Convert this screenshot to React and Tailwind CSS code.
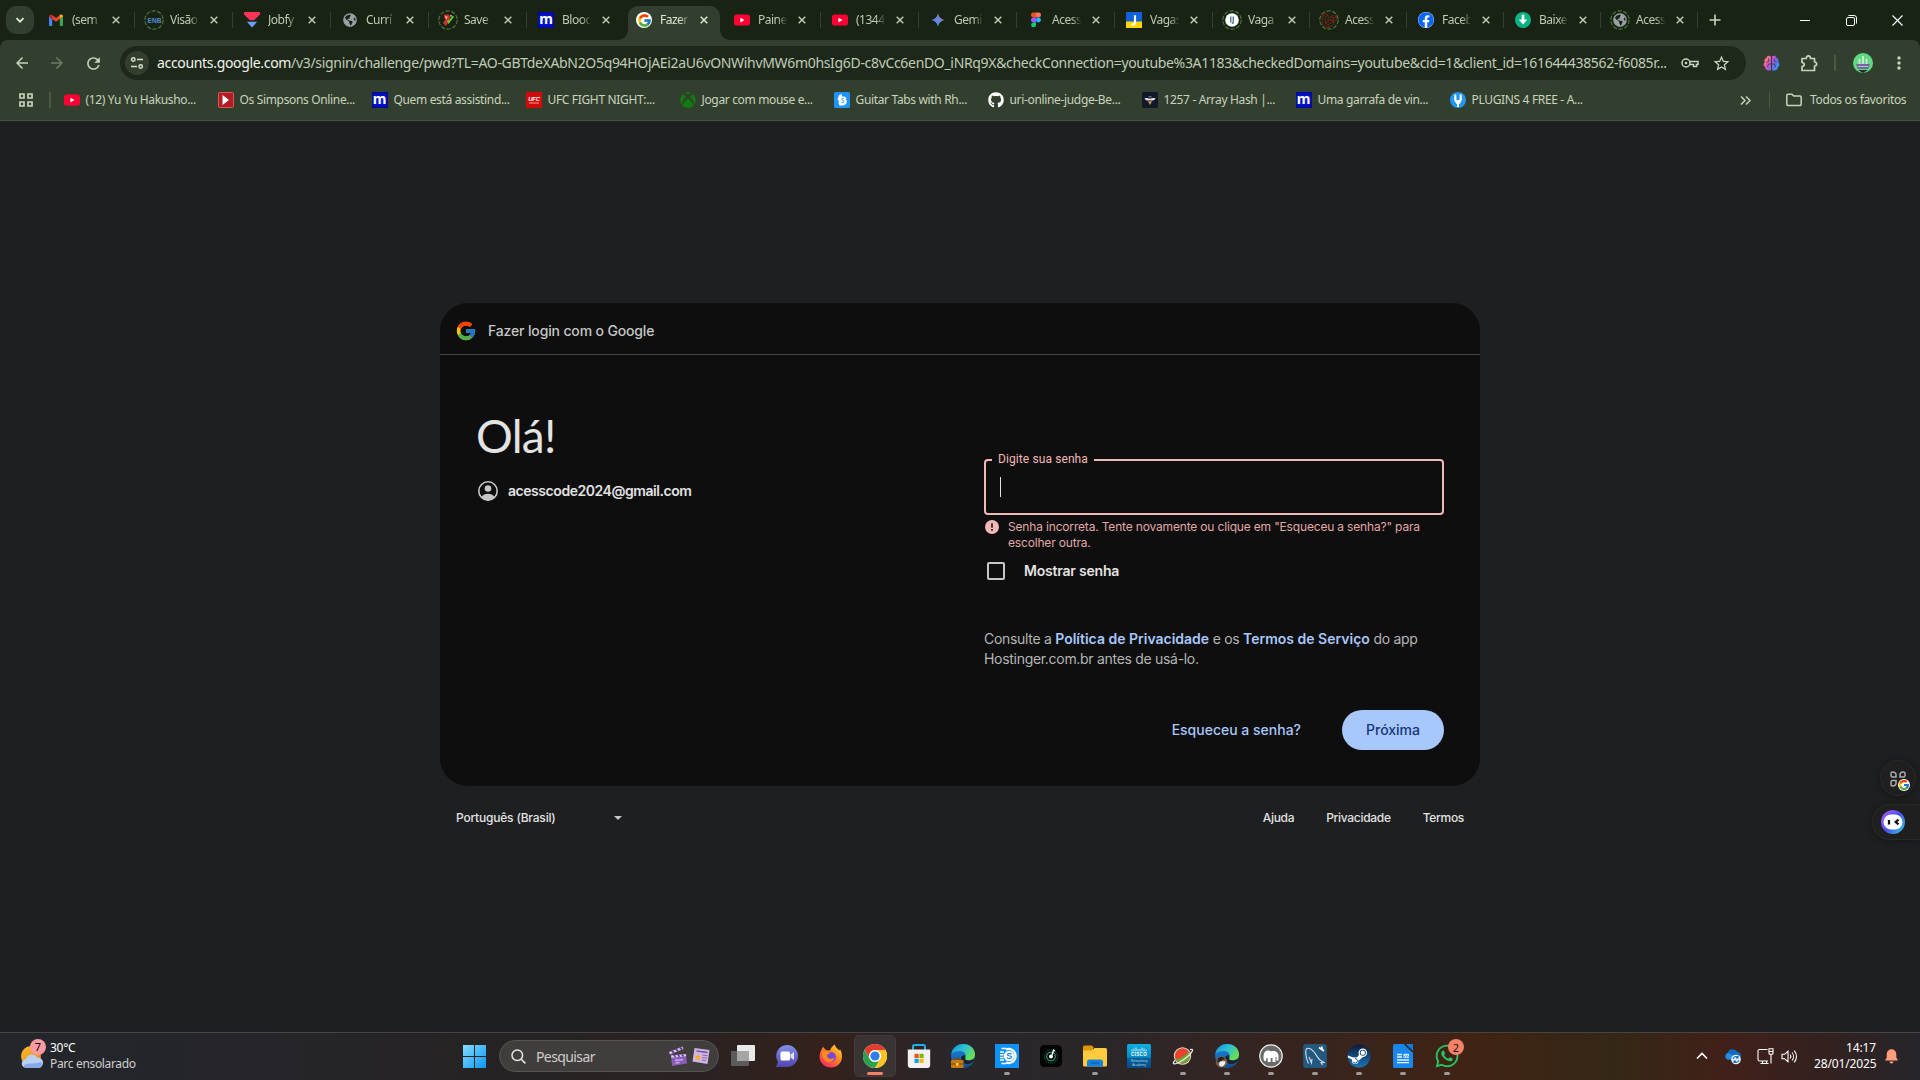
import React from 'react';
import { FcGoogle } from 'react-icons/fc';
import { FaFacebook, FaGithub, FaXbox, FaWhatsapp, FaLaravel, FaGlobeAmericas } from 'react-icons/fa';
import { MdOutlineExtension, MdArrowBack, MdArrowForward, MdRefresh, MdMoreVert, MdStarBorder } from 'react-icons/md';

const Svg = ({ s = 16, vb = '0 0 16 16', className = '', children }) => (
  <svg width={s} height={s} viewBox={vb} fill="none" className={`block shrink-0 ${className}`}>{children}</svg>
);

/* ---------- favicons ---------- */
const Gmail = () => (
  <Svg>
    <path d="M1 13.2V4.5l3.2 2.4V14H2a1 1 0 0 1-1-.8Z" fill="#4285f4" />
    <path d="M11.8 14V6.9L15 4.5V13a1 1 0 0 1-1 1Z" fill="#34a853" />
    <path d="M1 4.6C1 2.9 2.9 2 4.2 3v3.9L1 4.5Z" fill="#c5221f" />
    <path d="M4.2 3 8 5.9 11.8 3v3.9L8 9.8 4.2 6.9Z" fill="#ea4335" />
    <path d="M11.8 3C13.1 2 15 2.9 15 4.6l-3.2 2.3Z" fill="#fbbc04" />
  </Svg>
);
const Youtube = () => (
  <Svg>
    <rect x="0" y="2.6" width="16" height="11" rx="2.6" fill="#ff0033" />
    <path d="M6.4 5.8v4.6l4-2.3Z" fill="#fff" />
  </Svg>
);
const Ring = ({ children }) => (
  <span className="-m-0.5 grid size-5 shrink-0 place-items-center">
    <Svg s={20} vb="0 0 20 20" className="col-start-1 row-start-1">
      <circle cx="10" cy="10" r="9.2" stroke="#4c7340" strokeWidth="1.2" strokeDasharray="4.2 1.6" />
    </Svg>
    <span className="col-start-1 row-start-1 grid place-items-center">{children}</span>
  </span>
);
const Env = () => (
  <Ring>
    <Svg s={15} vb="0 0 15 15">
      <text x="7.5" y="10" textAnchor="middle" fontSize="6.6" fontWeight="800" fill="#4d8fd6" fontFamily="Liberation Sans">ENB</text>
    </Svg>
  </Ring>
);
const Jobfy = () => (
  <Svg>
    <path d="M0 0h16v2.4L10 8.2H6L0 2.4Z" fill="#fb3458" />
    <path d="M2.8 9.8h10.4L8 15.6Z" fill="#6b9dfa" />
  </Svg>
);
const Globe = () => <FaGlobeAmericas size={14} color="#9aa0a6" className="m-px shrink-0" />;
const SaveIcon = () => (
  <Ring>
    <Svg s={14} vb="0 0 14 14">
      <path d="M2.500 1.500 8 1.500l1.500 4L5 13l-3-3 2-3Z" fill="#d22d2d" />
      <path d="m6 8 1.500 3L13 4l-1-1.500L8 7.500 7.300 6.500Z" fill="#54d32c" />
      <path d="M4 3.500h2.500L5.500 6ZM9 2l2 .5-1 2Z" fill="#f3ece8" />
    </Svg>
  </Ring>
);
const MIcon = () => (
  <span className="flex size-4 shrink-0 items-center justify-center bg-[#0511c8] pb-0.5 font-['Noto_Sans',sans-serif] text-[14px] leading-none font-bold text-white shadow-[inset_0_0_3px_#000450]">m</span>
);
const Gemini = () => (
  <Svg>
    <defs>
      <linearGradient id="gem" gradientUnits="userSpaceOnUse" x1="1" y1="12" x2="15" y2="4"><stop stopColor="#3f8cf3" /><stop offset=".55" stopColor="#6f86dd" /><stop offset="1" stopColor="#c9737c" /></linearGradient>
    </defs>
    <path d="M8 1c.4 3.700 3.200 6.600 7 7-3.800.4-6.600 3.300-7 7-.4-3.700-3.200-6.600-7-7 3.800-.4 6.600-3.300 7-7Z" fill="url(#gem)" />
  </Svg>
);
const Figma = () => (
  <Svg>
    <path d="M8 .6H5.400a2.450 2.450 0 0 0 0 4.900H8Z" fill="#f24e1e" />
    <path d="M8 .6h2.600a2.450 2.450 0 0 1 0 4.900H8Z" fill="#ff7262" />
    <path d="M8 5.500H5.400a2.450 2.450 0 0 0 0 4.900H8Z" fill="#a259ff" />
    <circle cx="10.500" cy="7.950" r="2.450" fill="#1abcfe" />
    <path d="M8 10.400H5.400A2.450 2.450 0 1 0 8 12.900Z" fill="#0acf83" />
  </Svg>
);
const JIcon = () => (
  <Svg>
    <rect width="16" height="10" fill="#0f62dc" />
    <rect y="9.500" width="16" height="6.500" fill="#ffd500" />
    <path d="M9 3.200v7.300c0 2-1.300 2.300-3.500 2" stroke="#fff" strokeWidth="2.200" />
  </Svg>
);
const Ij = () => (
  <Ring>
    <Svg s={14} vb="0 0 14 14">
      <circle cx="7" cy="7" r="6.800" fill="#fff" />
      <path d="M5.800 3.500v6M8.300 3.500v5.500c0 1-.6 1.500-1.500 1.500" stroke="#4f7899" strokeWidth="1.400" />
    </Svg>
  </Ring>
);
const Laravel = () => <Ring><FaLaravel size={15} color="#b3241c" /></Ring>;
const Facebook = () => (
  <span className="grid size-4 shrink-0 place-items-center rounded-full bg-white"><FaFacebook size={16} color="#0866ff" /></span>
);
const Baixe = () => (
  <Svg>
    <circle cx="8" cy="8" r="8" fill="#0ab286" />
    <path d="M6.700 2.800h2.600v4.600h3L8 12.500 3.700 7.400h3Z" fill="#fff" />
  </Svg>
);
const GlobeRing = () => <Ring><FaGlobeAmericas size={14} color="#9aa0a6" /></Ring>;
const GoogleRound = () => (
  <span className="grid size-4 shrink-0 place-items-center rounded-full bg-white"><FcGoogle size={15} /></span>
);

const TABS = [
  ['(sem', Gmail], ['Visão', Env], ['Jobfy', Jobfy], ['Currí', Globe], ['Save', SaveIcon], ['Blood', MIcon],
  ['Fazer', GoogleRound], ['Paine', Youtube], ['(1344', Youtube], ['Gemi', Gemini], ['Acess', Figma], ['Vagas', JIcon],
  ['Vaga', Ij], ['Acess', Laravel], ['Faceb', Facebook], ['Baixe', Baixe], ['Acess', GlobeRing],
];

const Close = ({ className = '' }) => (
  <Svg s={8} vb="0 0 8 8" className={className}><path d="m.7.7 6.600 6.600M7.300.7.7 7.300" stroke="currentColor" strokeWidth="1.500" /></Svg>
);

function Tab({ title, Icon, index }) {
  const active = index === 6;
  const sep = index !== 5 && index !== 6;
  return (
    <div className={`relative flex h-10 items-center pl-[11px] ${index >= 12 ? 'w-[97px]' : 'w-[98px]'} ${active ? 'text-[#dfe6d6]' : 'text-[#bdcbb3]'}`}>
      {active && (
        <svg className="absolute -left-[7px] top-1.5" width="112" height="34" viewBox="0 0 112 34">
          <path d="M0 34a10 10 0 0 0 10-10V10A10 10 0 0 1 20 0H92a10 10 0 0 1 10 10V24a10 10 0 0 0 10 10Z" fill="#333f2e" />
        </svg>
      )}
      <span className="relative flex shrink-0"><Icon /></span>
      <span className="relative ml-2 w-[32px] text-[12px] tracking-[-0.5px] whitespace-nowrap [mask-image:linear-gradient(to_right,black_62%,transparent_92%)]">{title}</span>
      <Close className="relative ml-[8px]" />
      {sep && <span className="ml-auto h-4 w-[1.500px] bg-[#34402f]" />}
    </div>
  );
}

/* ---------- bookmarks ---------- */
const Simpsons = () => (
  <Svg><rect x=".5" y=".5" width="15" height="15" rx="1" fill="#b11d23" stroke="#d5585c" /><path d="M4.500 3v10l6.500-5Z" fill="#fff" /></Svg>
);
const Ufc = () => (
  <Svg>
    <rect width="16" height="16" fill="#d20a0a" />
    <text x="8" y="9" textAnchor="middle" fontSize="6" fontWeight="900" fontStyle="italic" fill="#fff" fontFamily="Liberation Sans">UFC</text>
    <path d="M3 11h10" stroke="#f0a0a0" />
  </Svg>
);
const Xbox = () => <FaXbox size={16} color="#107c10" className="shrink-0" />;
const Songsterr = () => (
  <Svg>
    <rect width="16" height="16" rx="1.500" fill="#1c94fb" />
    <path d="M5 3.200 8 2v2.500h2.500l2 1.500-.5 1.500 1 2-1 2.500-2.500 1.500H5.500L4.500 11 5 9 3.500 7.500Z" fill="#fff" />
    <path d="M9.800 6.500c-1.500-.5-2.300.3-2 1 .4.900 2.200.7 2.200 2 0 1-1.200 1.500-2.500 1" stroke="#1c94fb" strokeWidth=".9" />
  </Svg>
);
const Github = () => <FaGithub size={16} color="#fff" className="shrink-0" />;
const Bee = () => (
  <Svg><rect width="16" height="16" rx="2" fill="#111827" /><path d="M2.500 6.500c2-.8 3.500-.4 5.500.3 2-.7 3.500-1.100 5.500-.3-1 2-3 2.300-5.500 1.800C5.500 8.800 3.500 8.600 2.500 6.500Z" fill="#dfe3e8" /><path d="M5.800 9.300h4.400L8 13Z" fill="#c49a4d" /><path d="M6.500 4.800h3" stroke="#8b929c" /></Svg>
);
const Plug = () => (
  <Svg><circle cx="8" cy="8" r="8" fill="#2196f3" /><path d="M5.300 2.500v5.500M10.700 2.500v5.500M8 11v4" stroke="#fff" strokeWidth="2" /><path d="M4.300 6.500h2V8h3.400V6.500h2v2L9.500 12h-3L4.300 8.500Z" fill="#fff" /></Svg>
);

const BOOKMARKS = [
  ['(12) Yu Yu Hakusho...', Youtube], ['Os Simpsons Online...', Simpsons], ['Quem está assistind...', MIcon],
  ['UFC FIGHT NIGHT:...', Ufc], ['Jogar com mouse e...', Xbox], ['Guitar Tabs with Rh...', Songsterr],
  ['uri-online-judge-Be...', Github], ['1257 - Array Hash |...', Bee], ['Uma garrafa de vin...', MIcon], ['PLUGINS 4 FREE - A...', Plug],
];

function Chrome() {
  return (
    <header className="shrink-0 bg-[#182313] font-['Noto_Sans',sans-serif]">
      <div className="flex h-10 items-center text-[#c7d4bd]">
        <div className="ml-1.5 grid size-7 shrink-0 place-items-center rounded-[10px] bg-[#333f2e]">
          <Svg s={10} vb="0 0 10 10"><path d="m1.500 3.200 3.500 3.500 3.500-3.500" stroke="#e3ecd9" strokeWidth="1.700" /></Svg>
        </div>
        <div className="ml-[3px] flex shrink-0">
          {TABS.map(([t, I], i) => <Tab key={i} title={t} Icon={I} index={i} />)}
        </div>
        <Svg s={12} vb="0 0 12 12" className="ml-[11px]"><path d="M6 .5v11M.5 6h11" stroke="#c7d4bd" strokeWidth="1.600" /></Svg>
        <div className="ml-auto flex text-white">
          <span className="grid w-[46px] place-items-center"><Svg s={10} vb="0 0 10 10"><path d="M0 5.500h10" stroke="#fff" /></Svg></span>
          <span className="grid w-[46px] place-items-center"><Svg s={11} vb="0 0 11 11"><rect x=".5" y="2.500" width="8" height="8" rx="1.500" stroke="#fff" /><path d="M2.500.5H8a2.500 2.500 0 0 1 2.500 2.500v5.500" stroke="#fff" /></Svg></span>
          <span className="grid w-[46px] place-items-center"><Svg s={11} vb="0 0 11 11"><path d="m.5.5 10 10M10.500.5l-10 10" stroke="#fff" strokeWidth="1.100" /></Svg></span>
        </div>
      </div>

      <div className="rounded-t-lg bg-[#333f2e] text-[#c7d4bd]">
        <div className="flex h-[46px] items-center">
          <MdArrowBack size={18} className="ml-[13px] shrink-0" />
          <MdArrowForward size={18} className="ml-[17px] shrink-0 text-[#6d7a66]" />
          <MdRefresh size={19} className="ml-[18px] shrink-0" />
          <div className="ml-[17px] flex h-[34px] w-[1626px] shrink-0 items-center rounded-full bg-[#1d281a]">
            <span className="ml-[5px] grid size-6 shrink-0 place-items-center rounded-full bg-[#333f2e]">
              <Svg s={14} vb="0 0 14 14"><circle cx="3.300" cy="3.500" r="1.700" stroke="#d5e0cb" strokeWidth="1.500" /><path d="M7 3.500h6M1 10.500h6" stroke="#d5e0cb" strokeWidth="1.500" /><circle cx="10.700" cy="10.500" r="1.700" stroke="#d5e0cb" strokeWidth="1.500" /></Svg>
            </span>
            <span className="ml-2 w-[1515px] shrink-0 pb-px text-[14px] tracking-[-0.325px] whitespace-nowrap text-[#c0ccb6]"><span className="text-[#f1f5ec]">accounts.google.com</span>/v3/signin/challenge/pwd?TL=AO-GBTdeXAbN2O5q94HOjAEi2aU6vONWihvMW6m0hsIg6D-c8vCc6enDO_iNRq9X&amp;checkConnection=youtube%3A1183&amp;checkedDomains=youtube&amp;cid=1&amp;client_id=161644438562-f6085r...</span>
            <Svg s={18} vb="0 0 18 18" className="ml-[9px]"><circle cx="5" cy="9" r="4" stroke="#c7d4bd" strokeWidth="1.500" /><circle cx="5" cy="9" r="1.300" fill="#c7d4bd" /><path d="M9 7.500h8v3h-1.500v2h-3v-2H9" stroke="#c7d4bd" strokeWidth="1.500" /></Svg>
            <MdStarBorder size={19} className="ml-[13px] shrink-0" />
          </div>
          <Svg s={17} vb="0 0 17 17" className="ml-[17px]">
            <defs><linearGradient id="brain" gradientUnits="userSpaceOnUse" x1="0" y1="3" x2="17" y2="13"><stop stopColor="#ff9a3c" /><stop offset=".35" stopColor="#e650c8" /><stop offset=".7" stopColor="#5c6cf5" /><stop offset="1" stopColor="#23b5f0" /></linearGradient></defs>
            <path d="M8 1.500C5-.5 3.500 1.500 3.500 3 1.500 3.500 1 5.500 1.800 7 0 8.500.5 11 2 11.800 2 14.500 5 16.500 8 15Z M9 1.500c3-2 4.500 0 4.500 1.500 2 .5 2.500 2.500 1.700 4 1.800 1.500 1.300 4-.2 4.800 0 2.700-3 4.700-6 3.200Z" fill="url(#brain)" />
            <path d="M5.500 3.500 6 6 3.500 7.500M8 9H5.500L4.500 12M11.500 3.500 11 6l2.500 1.500M9 9h2.500l1 3" stroke="#333f2e" strokeWidth=".8" />
          </Svg>
          <Svg s={18} vb="0 0 18 18" className="ml-[20px]"><path d="M2 4.500h4.200c0-3.600 4.300-3.600 4.300 0H14.500V8c2.800.2 2.800 3.800 0 4v4.500H2v-4c3-.5 3-3.600 0-4Z" stroke="#c7d4bd" strokeWidth="1.700" strokeLinejoin="round" /></Svg>
          <span className="ml-[16px] h-4 w-[1.500px] bg-[#4b5944]" />
          <Svg s={20} vb="0 0 20 20" className="ml-[17px]"><circle cx="10" cy="10" r="10" fill="#5fd882" /><path d="M3 11h14l-2 5H5Z" fill="#79669b" /><path d="M6.500 11V6M10 11V3M13.500 11V6" stroke="#dfeee6" strokeWidth="1.600" /><path d="M4.500 9.500h3M12.500 9.500h3M5 13.500h10" stroke="#b3c3d6" strokeWidth="1.200" /><path d="M5 17h10l-5 3Z" fill="#222a3a" /></Svg>
          <MdMoreVert size={20} className="ml-4 shrink-0" />
        </div>

        <div className="flex h-[35px] items-start border-b border-[#46523f] text-[12px] tracking-[-0.34px]">
          <div className="flex h-7 w-full items-center">
            <Svg s={14} vb="0 0 14 14" className="ml-[19px]"><path d="M1 1h4v4H1ZM9 1h4v4H9ZM1 9h4v4H1ZM9 9h4v4H9Z" stroke="#c7d4bd" strokeWidth="1.700" /></Svg>
            <span className="ml-4 h-4 w-[1.500px] bg-[#4b5944]" />
            <div className="ml-[13px] flex">
              {BOOKMARKS.map(([t, I], i) => (
                <div key={i} className="flex w-[154px] items-center gap-1.5 whitespace-nowrap"><I /><span className="pb-px">{t}</span></div>
              ))}
            </div>
            <Svg s={11} vb="0 0 11 11" className="ml-[136px]"><path d="m1 1.500 4 4-4 4M6 1.500l4 4-4 4" stroke="#c7d4bd" strokeWidth="1.500" /></Svg>
            <span className="ml-[18px] h-4 w-[1.500px] bg-[#4b5944]" />
            <Svg s={16} vb="0 0 16 16" className="ml-4"><path d="M.8 3.500a1.200 1.200 0 0 1 1.200-1.200h4l1.700 1.800H14a1.200 1.200 0 0 1 1.200 1.200v7a1.200 1.200 0 0 1-1.200 1.200H2a1.200 1.200 0 0 1-1.200-1.200Z" stroke="#c7d4bd" strokeWidth="1.500" /></Svg>
            <span className="ml-2 pb-px whitespace-nowrap">Todos os favoritos</span>
          </div>
        </div>
      </div>
    </header>
  );
}

/* ---------- sign-in card ---------- */
function SignIn() {
  return (
    <main className="relative flex flex-1 flex-col items-center bg-[#1e1f20] pt-[182px] font-['Inter',sans-serif] text-[#e3e3e3]">
      <section className="h-[483px] w-[1040px] rounded-[28px] bg-[#0e0e0e]">
        <div className="flex h-[52px] items-center gap-[11px] border-b border-[#444746] pt-[4px] pl-[15px] text-[14px] font-medium text-[#c4c7c5]">
          <FcGoogle size={22} />
          <span className="tracking-[-0.15px]">Fazer login com o Google</span>
        </div>
        <div className="flex justify-between pr-9 pl-9">
          <div className="pt-[55px]">
            <h1 className="font-['Lato',sans-serif] text-[46px] leading-[52px] tracking-[-0.7px]">Olá!</h1>
            <div className="mt-[18px] flex items-center gap-[8px] text-[14px] font-semibold">
              <Svg s={20} vb="0 0 20 20" className="ml-[2px] mr-0.5">
                <circle cx="10" cy="10" r="9.200" stroke="#c4c7c5" strokeWidth="1.600" />
                <circle cx="10" cy="7.500" r="3.300" fill="#c4c7c5" />
                <path d="M3.200 16c3-4.500 10.600-4.500 13.600 0-3 4.500-10.600 4.500-13.600 0Z" fill="#c4c7c5" />
              </Svg>
              <span className="tracking-[-0.45px]">acesscode2024@gmail.com</span>
            </div>
          </div>

          <div className="w-[460px] pt-[104px]">
            <div className="relative h-14 rounded border-2 border-[#f2b8b5] pt-4 pl-[14px]">
              <span className="absolute -top-[10px] left-[6px] bg-[#0e0e0e] px-[6px] font-['Roboto',sans-serif] text-[12px] leading-4 tracking-[0.1px] text-[#f2b8b5]">Digite sua senha</span>
              <div className="h-5 w-px bg-[#e3e3e3]" />
            </div>
            <div className="mt-1 flex gap-[9px] text-[12px] leading-4 text-[#e0a9a6]">
              <Svg s={14} vb="0 0 14 14" className="mt-[1px] ml-[1px]"><circle cx="7" cy="7" r="7" fill="#f2b8b5" /><path d="M7 3.300v4.400M7 9v1.700" stroke="#0e0e0e" strokeWidth="1.500" /></Svg>
              <p className="tracking-[-0.17px] whitespace-nowrap">Senha incorreta. Tente novamente ou clique em "Esqueceu a senha?" para<br />escolher outra.</p>
            </div>
            <div className="mt-[11px] flex h-[18px] items-center">
              <span className="ml-[3px] size-[18px] rounded-[2px] border-2 border-[#c4c7c5]" />
              <span className="ml-[19px] pb-0.5 text-[14px] font-semibold tracking-[-0.2px]">Mostrar senha</span>
            </div>
            <p className="mt-[49px] text-[14px] leading-5 tracking-[-0.3px] whitespace-nowrap text-[#b3b6b4]">
              Consulte a <a className="font-semibold tracking-[0px] text-[#a8c7fa]">Política de Privacidade</a> e os <a className="font-semibold tracking-[0px] text-[#a8c7fa]">Termos de Serviço</a> do app<br />Hostinger.com.br antes de usá-lo.
            </p>
            <div className="mt-[41px] flex h-10 items-center justify-end text-[14px] font-medium">
              <span className="mr-[41px] pb-0.5 text-[#a8c7fa]">Esqueceu a senha?</span>
              <button className="h-10 w-[102px] rounded-full bg-[#a8c7fa] pb-0.5 text-[#13377a]">Próxima</button>
            </div>
          </div>
        </div>
      </section>
      <footer className="mt-[24px] flex w-[1040px] items-center px-4 text-[12px] leading-4 font-medium tracking-[-0.2px]">
        <span className="w-[158px]">Português (Brasil)</span>
        <span className="border-x-4 border-t-4 border-x-transparent border-t-[#c4c7c5]" />
        <nav className="ml-auto flex gap-8 tracking-[-0.3px]"><span>Ajuda</span><span>Privacidade</span><span>Termos</span></nav>
      </footer>

      <div className="absolute top-[639px] right-0 flex flex-col items-end gap-2">
        <div className="mr-1 flex size-9 items-center justify-center rounded-full border border-[#292a2a] bg-[#1f1f1f] shadow-[0_1px_6px_rgba(0,0,0,.35)]">
          <span className="relative mt-px">
            <Svg s={20} vb="0 0 20 20">
              <path d="M3 6.500V4.200A1.500 1.500 0 0 1 4.500 3C6.500 3 8 4.200 8 6v2H4.500A1.500 1.500 0 0 1 3 6.500ZM17 6.500V4.200A1.500 1.500 0 0 0 15.500 3C13.500 3 12 4.200 12 6v2h3.500A1.500 1.500 0 0 0 17 6.500ZM3 13v2.500A1.500 1.500 0 0 0 4.500 17C6.500 17 8 15.800 8 14v-2.500H4.500A1.500 1.500 0 0 0 3 13Z" stroke="#a9abae" strokeWidth="1.500" />
            </Svg>
            <span className="absolute -right-[2px] -bottom-[2px] grid size-3 place-items-center rounded-full bg-white"><FcGoogle size={12} /></span>
          </span>
        </div>
        <div className="flex h-9 w-12 items-center rounded-l-full border border-r-0 border-[#292a2a] bg-[#1f1f1f] pl-2 shadow-[0_1px_6px_rgba(0,0,0,.35)]">
          <Svg s={24} vb="0 0 24 24">
            <defs><linearGradient id="bot" gradientUnits="userSpaceOnUse" x1="2" y1="4" x2="22" y2="20"><stop stopColor="#9a5cf7" /><stop offset=".5" stopColor="#4b50ee" /><stop offset="1" stopColor="#35b8dd" /></linearGradient></defs>
            <circle cx="12" cy="12" r="12" fill="url(#bot)" />
            <rect x="2.500" y="4.500" width="19" height="15" rx="7.500" fill="#fff" />
            <path d="M8 10v4.500M17.500 9.700 14.700 12l2.800 2.300" stroke="#111" strokeWidth="2.200" />
          </Svg>
        </div>
      </div>
    </main>
  );
}

/* ---------- taskbar ---------- */
const I = ({ children }) => <Svg s={24} vb="0 0 24 24">{children}</Svg>;
const EdgeBase = () => (
  <>
    <circle cx="12" cy="12" r="11.900" fill="url(#edgeLow)" />
    <path d="M.4 10C1.500 4 6.500.1 12.200.1 19 .1 24 4.800 24 10.500c0 3.700-2.800 6-6.300 6-3 0-4.300-1.200-3.400-2.700C15.800 11 13.800 7 9.200 7 5 7 1.500 8 .4 10Z" fill="url(#edgeTop)" />
    <path d="M14.300 13.800c-.8 1.500.5 2.700 3.400 2.700 2 0 3.800-.8 5-2l.2 2.300-2.400 2.200c-5 3-10.500 0-10.500-4.200 0-2.300 2-4 4-3.300Z" fill="#1f2227" />
    <path d="M9 14.500c-1 5.500 5.500 8 11.500 4.500-2.500 4-7 5.500-10.500 4.700C6.500 22 6 17 9 14.500Z" fill="#0f4f96" />
  </>
);
const taskIcons = [
  [<I><rect x="0" y="7" width="18" height="15" rx="1" fill="#5b5b5b" /><rect x="6" y="1" width="18" height="16" rx="1" fill="#e9e9e9" /><path d="M6 7h12v10H7a1 1 0 0 1-1-1Z" fill="#a5a5a5" /></I>],
  [<I><path d="M12 1a11 11 0 1 1 0 22H1l2-5A11 11 0 0 1 12 1Z" fill="url(#chat)" /><rect x="5.500" y="7.500" width="9.500" height="9" rx="1.500" fill="#fff" /><path d="m15.500 10.500 3.500-2.500v8l-3.500-2.500Z" fill="#e2e0ff" /></I>],
  [<I><path d="M2.500 5.500 4 2.800l3 3.400 4 .3C11.500 4 14 1.500 16 .5c0 3 3 4 4 6l1-1c1.500 2 2 4.500 2 7C23 19 18 23.500 12 23.500S.5 19 .5 12.500c0-2.500 1-5 2-7Z" fill="url(#ff)" /><circle cx="12" cy="13" r="5" fill="#7a45d8" /><path d="M3 8c3-1.500 6-.5 8.500 1.500-2 0-4 1-3 3.500 1.500 3 5 2 7 .5-1 4-4.500 5.500-8 4S3 12 3 8Z" fill="#ff8b16" /></I>],
  [<I><circle cx="12" cy="12" r="12" fill="#fff" /><path d="M1.600 6A12 12 0 0 1 22.400 6H12a6 6 0 0 0-5.200 9Z" fill="#e33b2e" /><path d="M1.600 6a12 12 0 0 0 10.400 18L17.200 15a6 6 0 0 1-10.400 0Z" fill="#2ba14b" /><path d="M22.400 6A12 12 0 0 1 12 24l5.200-9A6 6 0 0 0 12 6Z" fill="#fcc31e" /><circle cx="12" cy="12" r="5.800" fill="#fff" /><circle cx="12" cy="12" r="4.600" fill="#2f7de9" /></I>, 'active'],
  [<I><path d="M6 6V2.500A1.500 1.500 0 0 1 7.500 1h9A1.500 1.500 0 0 1 18 2.500V6" stroke="#23aeea" strokeWidth="2" /><path d="M.8 5.500h22.400V21a3 3 0 0 1-3 3H3.800a3 3 0 0 1-3-3Z" fill="#f1f1f1" /><path d="M7.500 9.800h4.200V14H7.500Z" fill="#f25022" /><path d="M12.500 9.800h4.200V14h-4.200Z" fill="#7fba00" /><path d="M7.500 14.800h4.200V19H7.500Z" fill="#00a4ef" /><path d="M12.500 14.800h4.200V19h-4.200Z" fill="#ffb900" /></I>],
  [<I><EdgeBase /><path d="M3.500 16v-1.500h5V16" stroke="#7a4b06" strokeWidth="1.400" /><rect x="0" y="16" width="12.500" height="8" rx="1" fill="#c97a0e" /><path d="M0 20h12.500" stroke="#7c4706" /><path d="M5 19h2.500v2.500H5Z" fill="#ffd359" /></I>],
  [<I><rect width="24" height="24" fill="#0f92f5" /><path d="M11 5.500a7 7 0 1 1 0 13" stroke="#fff" strokeWidth="2.200" /><circle cx="14" cy="12" r="5.200" fill="#fff" /><path d="M6.500 4.500h4.500M5 8h4M5 10.700h3.500M5 13.400h3.500M5 16h4M6.500 19.500h4.500" stroke="#fff" strokeWidth="1.500" /><text x="14.300" y="15.300" textAnchor="middle" fontSize="9" fontWeight="700" fill="#0f7fdc" fontFamily="Liberation Sans">S</text></I>, 'dot'],
  [<I><rect x="1" y="1" width="22" height="22" rx="4.500" fill="#020504" /><circle cx="12" cy="12.500" r="6.500" stroke="#17513d" strokeWidth="1.200" strokeDasharray="1.200 .8" /><circle cx="12" cy="12.500" r="4.300" stroke="#3aa57e" strokeWidth="1.100" /><circle cx="12" cy="12.500" r="2" fill="#fff" /><path d="m13 11 1.500-5 1.500 1" stroke="#fff" strokeWidth="1.300" /></I>],
  [<I><path d="M0 3a1.500 1.500 0 0 1 1.500-1.500H9L11 4h-1v3H0Z" fill="#dd9606" /><path d="M0 6.500h9L11.500 4H22.500A1.500 1.500 0 0 1 24 5.500V21a1.500 1.500 0 0 1-1.500 1.500h-21A1.500 1.500 0 0 1 0 21Z" fill="#fecb3e" /><path d="M4 22.500V18a2.500 2.500 0 0 1 2.500-2.500h11A2.500 2.500 0 0 1 20 18v4.500Z" fill="#1681dc" /><path d="M8 19h8" stroke="#0e5ca8" strokeWidth="1.200" /></I>, 'dot'],
  [<I><rect width="24" height="24" rx="1.500" fill="url(#cisco)" /><path d="M5 5.500v2M7 4.500v3M9 3.500v4M11 5v2.500M13 5v2.500M15 3.500v4M17 4.500v3M19 5.500v2" stroke="#c4eefb" /><text x="12" y="12.300" textAnchor="middle" fontSize="4.600" fontWeight="800" letterSpacing=".3" fill="#fff" fontFamily="Liberation Sans">CISCO</text><text x="12" y="18" textAnchor="middle" fontSize="3.300" fill="#a9d2e8" fontFamily="Liberation Sans">Networking</text><text x="12" y="22" textAnchor="middle" fontSize="3.300" fill="#a9d2e8" fontFamily="Liberation Sans">Academy</text></I>],
  [<I><circle cx="11.500" cy="12" r="8.700" fill="#e2e0dc" /><circle cx="11.500" cy="12" r="7.700" fill="#e8432d" /><path d="M4.300 14.800c4 1 10.700-3.800 13.700-7.300 2 4 1 8.500-2 10.500-4.500 3-9.500 1-11.700-3.200Z" fill="#6aa636" /><path d="M4 16.500c-3.500 3.500-1 4.500 4 2 6-3 12.500-9 13.500-12 .4-1.400-1-1.300-2.500-.8" stroke="#eceae4" strokeWidth="1.300" /></I>, 'dot'],
  [<I><EdgeBase /><circle cx="6.500" cy="18" r="5.800" fill="#70594b" /><path d="M4 21c0-5 3-5 6.500-3.500 0 3-2.500 5.500-5 5Z" fill="#f1efed" /><path d="M3 14.500c2-2 5-2 6.500 0L8 17l-4 .5-2 1Z" fill="#262223" /><path d="M7 15.500 9.500 17l-1.500 1Z" fill="#f0a34d" /></I>, 'dot'],
  [<I><circle cx="12" cy="12" r="11.200" fill="#6b6b6b" stroke="#f2f2f2" strokeWidth="1.200" /><path d="M4.500 13.500C4.500 9 6 6.500 9 6.500c1.300 0 2 .4 2.500.9C15.500 6 19.500 7.800 19.500 12v4.500h-2v-3.700l-1 .7V18h-3v-4h-1.800v4h-3v-4.200c-1.700.5-1.700 1.700-1.700 3.200H5.500c-.7-1-1-2-1-3.500Z" fill="#fff" /></I>, 'dot'],
  [<I><rect x=".2" y="0" width="23.600" height="24" rx="2.500" fill="#24587f" /><path d="M5.500 19.500C2.500 14 2 5.500 4 4.500c2-.8 5 1 7 3.500 2.500 3 3.500 6 6 8l4 2.500-3 .3 1.500 2M6 13l2.500 6 .5-4" stroke="#cfe2ef" strokeWidth="1.100" /><path d="m16 3.500 5 3.500M18.500 2.500 19.500 5.500" stroke="#fff" strokeWidth="1.600" /></I>, 'dot'],
  [<I><circle cx="12" cy="12" r="11.500" fill="url(#steam)" /><path d="M.8 13.500 8 17l4.500-1 5.500-5-3.500-3.500-4.500 6-3 .3-6-2.300Z" fill="#fff" /><circle cx="15.800" cy="8.800" r="4.300" fill="#fff" /><circle cx="15.800" cy="8.800" r="3" fill="#163a70" /><circle cx="15.800" cy="8.800" r="2.200" fill="#fff" /><circle cx="8.200" cy="16.800" r="3.300" fill="#fff" /><path d="M6 17.500a2.300 2.300 0 1 0 2-3" stroke="#1a5c9c" strokeWidth="1" /></I>, 'dot'],
  [<I><path d="M2 1.500A1.500 1.500 0 0 1 3.500 0H14l8 8v14.500A1.500 1.500 0 0 1 20.500 24h-17A1.500 1.500 0 0 1 2 22.500Z" fill="#1886ea" /><path d="M14.500 0H22v7.500Z" fill="#1579d6" /><path d="m13.500 0 8.500 8" stroke="#232425" strokeWidth="1.400" /><path d="M6 10.500h5M6 13h5M6 16h12M6 18.700h12" stroke="#e4f2fe" strokeWidth="1.300" /><path d="M12.500 9.800H18v4h-5.500Z" fill="#dceefe" /><path d="m13 13 1.500-1.500 1 1 1-1.200 1 1.700" stroke="#1886ea" strokeWidth=".8" /></I>, 'dot'],
  [<span className="relative"><FaWhatsapp size={26} color="#25c55f" /><span className="absolute -top-[4px] -right-[4px] grid size-4 place-items-center rounded-full bg-[#f58268] text-[11px] leading-none text-[#1b0f0c]">2</span></span>, 'dot'],
];

function Taskbar() {
  return (
    <footer className="flex h-12 shrink-0 items-center border-t border-[#454545] bg-[linear-gradient(90deg,#23262b_0%,#25252b_13%,#262324_25%,#2a2221_37%,#34211b_43%,#29262a_50%,#2b2628_58%,#37241f_67%,#3f2314_77%,#352716_84%,#41201a_90%,#33211f_95%,#25252b_100%)] pb-px font-['Noto_Sans',sans-serif] text-[12px] text-white">
      <svg width="0" height="0" className="absolute">
        <defs>
          <linearGradient id="edgeTop" x1="0" y1="0" x2="1" y2=".6"><stop stopColor="#1a8fd8" /><stop offset=".5" stopColor="#2bc0d6" /><stop offset="1" stopColor="#6be04c" /></linearGradient>
          <linearGradient id="edgeLow" x1="0" y1="0" x2="0" y2="1"><stop stopColor="#1c7fd0" /><stop offset="1" stopColor="#125eb3" /></linearGradient>
          <linearGradient id="chat" x1="0" y1="0" x2="0" y2="1"><stop stopColor="#8390ea" /><stop offset="1" stopColor="#5046b0" /></linearGradient>
          <linearGradient id="ff" x1="1" y1="0" x2=".2" y2="1"><stop stopColor="#ffe93c" /><stop offset=".45" stopColor="#ff8a1e" /><stop offset="1" stopColor="#f5246e" /></linearGradient>
          <linearGradient id="cisco" x1="0" y1="0" x2="0" y2="1"><stop stopColor="#11aee0" /><stop offset=".55" stopColor="#078cc4" /><stop offset=".6" stopColor="#065f9c" /><stop offset="1" stopColor="#054c86" /></linearGradient>
          <linearGradient id="steam" x1="0" y1="0" x2="0" y2="1"><stop stopColor="#0d1a3b" /><stop offset="1" stopColor="#1875b5" /></linearGradient>
          <linearGradient id="win" x1="0" y1="0" x2="23" y2="23" gradientUnits="userSpaceOnUse"><stop stopColor="#85dcfd" /><stop offset="1" stopColor="#0b95f5" /></linearGradient>
          <linearGradient id="sun" x1="0" y1="0" x2="1" y2="1"><stop stopColor="#fbc12d" /><stop offset="1" stopColor="#ee7a1c" /></linearGradient>
        </defs>
      </svg>
      <div className="flex w-[463px] items-center pl-[20px]">
        <span className="relative -mt-[5px] h-[30px] w-[26px]">
          <svg width="26" height="30" viewBox="0 0 26 30"><circle cx="11" cy="17" r="10" fill="url(#sun)" /><path d="M6.500 29a4.500 4.500 0 0 1-.5-9 6 6 0 0 1 11-1.500A5.300 5.300 0 0 1 18.500 29Z" fill="#b9d0f3" /><path d="M4 26c4-3 10 0 17-3 2 3 0 6-2.500 6h-12c-1.500 0-3-1.500-2.500-3Z" fill="#86a8e6" /></svg>
          <span className="absolute top-0 left-[10px] grid size-4 place-items-center rounded-full bg-[#ff99a4] text-[11px] leading-none text-black">7</span>
        </span>
        <span className="ml-1 leading-4"><span className="block tracking-[-0.3px]">30°C</span><span className="block tracking-[-0.33px] text-[#cfcfcf]">Parc ensolarado</span></span>
      </div>
      <Svg s={23} vb="0 0 23 23"><path d="M0 0h11v11H0ZM12 0h11v11H12ZM0 12h11v11H0ZM12 12h11v11H12Z" fill="url(#win)" /></Svg>
      <div className="ml-[13px] flex h-8 w-[220px] items-center rounded-full border border-[#575352] bg-[#403d3d] pl-[11px]">
        <Svg s={15} vb="0 0 15 15"><circle cx="6.300" cy="6.300" r="5.300" stroke="#e6e6e6" strokeWidth="1.500" /><path d="m10.200 10.200 4.200 4.200" stroke="#e6e6e6" strokeWidth="1.600" /></Svg>
        <span className="ml-[10px] text-[14px] tracking-[-0.6px] text-[#cfcccb]">Pesquisar</span>
        <Svg s={20} vb="0 0 20 20" className="ml-auto"><path d="m3 9 15-1 1 9.500L4 20Z" fill="#8a5cb6" /><path d="M1 6 14.500.5l1 2.500L2 8.500Z" fill="#d9bff0" /><path d="m4 4.800 2 2M8 3.200l2 2M12 1.500l2 2" stroke="#5f3690" strokeWidth="1.800" /><path d="m3 9.500 15-1.200.2 2L3.300 11.700Z" fill="#e0caf4" /><path d="m6 9 1.500 2M10 8.700l1.500 2M14 8.500l1.500 2" stroke="#5f3690" strokeWidth="1.500" /><path d="m7 14.500 8-1M7.500 17l4-.5" stroke="#c9a5e8" strokeWidth="1.300" /></Svg>
        <Svg s={18} vb="0 0 18 18" className="mr-2 ml-1"><path d="m2.500 1 15 2-2 14-15-2.500Z" fill="#cdb5e4" /><path d="m4.500 4 11 1.500" stroke="#7a51a4" strokeWidth="1.600" /><path d="m10.500 8 5 .7M10.200 10.500l5 .7M10 13l4 .6" stroke="#8a63b4" /><path d="m6 6.800 1 2.200 2.400.3-1.800 1.600.5 2.400L6 12.100l-2.200 1.200.5-2.400L2.500 9.300 5 9Z" fill="#ffae1b" /></Svg>
      </div>
      <div className="ml-[2px] flex">
        {taskIcons.map(([icon, state], i) => (
          <div key={i} className={`relative mx-[2px] flex size-10 items-center justify-center rounded ${state === 'active' ? 'bg-[#3a3334] ring-1 ring-[#423b3c]' : ''}`}>
            {icon}
            {state === 'active' && <span className="absolute bottom-[1px] h-[3px] w-4 rounded-full bg-[#f58268]" />}
            {state === 'dot' && <span className="absolute bottom-[1px] h-[3px] w-1.5 rounded-full bg-[#9e9a98]" />}
          </div>
        ))}
      </div>
      <div className="ml-auto flex items-center pr-[21px]">
        <Svg s={12} vb="0 0 12 12"><path d="m1 8.500 5-5 5 5" stroke="#fff" strokeWidth="1.600" /></Svg>
        <Svg s={18} vb="0 0 18 18" className="ml-[16px]"><path d="M3.500 12.500A3.500 3.500 0 0 1 3.500 6 5.500 5.500 0 0 1 13.500 5a4 4 0 0 1 1.500 7.500Z" fill="#0f6cbd" /><path d="M3.500 12.500A3.500 3.500 0 0 1 4 6l7 3v3.500Z" fill="#2390e6" /><circle cx="12" cy="12.500" r="4.800" fill="#e8f3fd" /><path d="M9 12a3 3 0 0 1 5-1.500M15 13a3 3 0 0 1-5 1.500M14 9v2h-2M10 16v-2h2" stroke="#0f6cbd" strokeWidth="1.100" /></Svg>
        <Svg s={17} vb="0 0 17 17" className="ml-[15px]"><path d="M10.500 1.500h-8A1.500 1.500 0 0 0 1 3v8.500A1.500 1.500 0 0 0 2.500 13H11M3.500 15.500h8M5.500 13v2.500M9.500 13v2.500" stroke="#fff" strokeWidth="1.100" /><path d="M12 .8h4v4.500a1 1 0 0 1-1 1h-2a1 1 0 0 1-1-1ZM12 3.500h4M14 6.500V15.500" stroke="#fff" strokeWidth="1.100" /></Svg>
        <Svg s={17} vb="0 0 17 17" className="ml-[7px]"><path d="M1 6.300v4.400h2.500l3.500 3V3.300l-3.500 3Z" stroke="#fff" strokeWidth="1.100" /><path d="M9 6.500a3 3 0 0 1 0 4M11 4.500a6 6 0 0 1 0 8M13.200 2.700a8.600 8.600 0 0 1 0 11.600" stroke="#fff" strokeWidth="1.100" /></Svg>
        <span className="ml-[16px] w-[62px] text-right leading-4 tracking-[-0.15px] whitespace-nowrap"><span className="block">14:17</span><span className="block">28/01/2025</span></span>
        <Svg s={15} vb="0 0 15 15" className="ml-[8px]"><path d="M7.500.3a4.800 4.800 0 0 1 4.800 4.800v3.500l1.700 3H1l1.700-3V5.100A4.800 4.800 0 0 1 7.500.3ZM5.500 12.500h4a2 2 0 0 1-4 0Z" fill="#ff9c7c" /></Svg>
      </div>
    </footer>
  );
}

export default function App() {
  return (
    <div className="flex h-[1080px] w-[1920px] flex-col overflow-hidden">
      <Chrome />
      <SignIn />
      <Taskbar />
    </div>
  );
}
